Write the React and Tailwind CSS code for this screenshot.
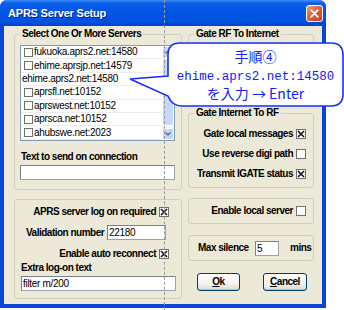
import React from "react";

const SANS = "[font-family:'Liberation_Sans',Arial,sans-serif]";

function Check({ checked, size = 10 }) {
  return (
    <span
      className={`inline-flex items-center justify-center border border-[#6f6f6f] bg-white shrink-0 ${size === 10 ? "w-[10px] h-[10px]" : "w-[9px] h-[9px]"}`}
    >
      {checked && (
        <svg width="8" height="8" viewBox="0 0 8 8">
          <path d="M1 1L7 7M7 1L1 7" stroke="#1a1a1a" strokeWidth="1.7" />
        </svg>
      )}
    </span>
  );
}

function Bold({ children, className = "" }) {
  return (
    <span className={`font-bold text-[10px] leading-[12px] tracking-[-0.5px] text-black whitespace-nowrap ${className}`}>
      {children}
    </span>
  );
}

const servers = [
  { t: "fukuoka.aprs2.net:14580", cb: true },
  { t: "ehime.aprsjp.net:14579", cb: true },
  { t: "ehime.aprs2.net:14580", cb: false },
  { t: "aprsfl.net:10152", cb: true },
  { t: "aprswest.net:10152", cb: true },
  { t: "aprsca.net:10152", cb: true },
  { t: "ahubswe.net:2023", cb: true },
];

function Legend({ children }) {
  return (
    <legend className="ml-[5px] px-[2px] font-bold text-[10px] leading-[12px] tracking-[-0.5px] text-black whitespace-nowrap">
      {children}
    </legend>
  );
}

function Input({ value = "", className = "" }) {
  return (
    <div
      className={`bg-white border border-[#9aa2ac] border-t-[#7b818a] border-l-[#7b818a] text-[10px] leading-[13px] tracking-[-0.3px] pl-[1px] text-black overflow-hidden whitespace-nowrap ${className}`}
    >
      {value}
    </div>
  );
}

function Button({ children, className = "" }) {
  return (
    <div
      className={`h-[18px] flex items-center justify-center rounded-[3px] border border-[#003c74] bg-[linear-gradient(to_bottom,#ffffff_0%,#f4f3ee_60%,#dcd9cc_100%)] shadow-[inset_0_-1px_0_#c8c4b4] ${className}`}
    >
      <Bold>{children}</Bold>
    </div>
  );
}

export default function App() {
  return (
    <div className={`relative w-[344px] h-[310px] bg-white overflow-hidden ${SANS}`}>
      {/* Window */}
      <div className="w-[326px] h-[308px] flex flex-col rounded-t-[7px] bg-[#0846d6] overflow-hidden">
        {/* Title bar */}
        <div className="h-[26px] shrink-0 flex items-center justify-between pl-[8px] pr-[3px] bg-[linear-gradient(to_bottom,#3d8ffc_0%,#0a5de9_12%,#0256e5_45%,#0053e1_80%,#0042cf_100%)]">
          <span className="text-white font-bold text-[11px] tracking-[-0.2px] [text-shadow:1px_1px_0_#0b1f8a]">
            APRS Server Setup
          </span>
          <div className="w-[17px] h-[17px] rounded-[3px] border border-white flex items-center justify-center bg-[linear-gradient(135deg,#f0a080_0%,#e0603a_45%,#c8401e_100%)]">
            <svg width="9" height="9" viewBox="0 0 9 9">
              <path d="M1.2 1.2L7.8 7.8M7.8 1.2L1.2 7.8" stroke="#fff" strokeWidth="1.8" strokeLinecap="round" />
            </svg>
          </div>
        </div>
        {/* Client area */}
        <div className="mx-[4px] mb-[4px] flex-1 bg-[#ece9d8] flex gap-[6px] pl-[10px] pt-[2px]">
          {/* Left column */}
          <div className="w-[168px] flex flex-col">
            <fieldset className="h-[162px] border border-[#d0d0bf] rounded-[3px]">
              <Legend>Select One Or More Servers</Legend>
              <div className="ml-[5px] mt-[5px] w-[155px] h-[96px] border border-[#7f9db9] bg-white flex">
                <div className="flex-1 flex flex-col">
                  {servers.map((s, i) => (
                    <div
                      key={i}
                      className="h-[13.4px] flex items-center border-b border-[#ececec] text-[10px] tracking-[-0.3px] text-black whitespace-nowrap"
                    >
                      {s.cb ? (
                        <div className="flex items-center pl-[3px] gap-[1px]">
                          <Check checked={false} size={9} />
                          <span className="leading-[12px]">{s.t}</span>
                        </div>
                      ) : (
                        <span className="pl-[1px] leading-[12px]">{s.t}</span>
                      )}
                    </div>
                  ))}
                </div>
                {/* scrollbar */}
                <div className="w-[12px] flex flex-col bg-[#f3f2ec]">
                  <div className="h-[12px] rounded-[2px] border border-white bg-[#c4d4fb] flex items-center justify-center">
                    <svg width="6" height="4" viewBox="0 0 6 4">
                      <path d="M0.5 3.5L3 1L5.5 3.5" stroke="#4d6185" strokeWidth="1.2" fill="none" />
                    </svg>
                  </div>
                  <div className="h-[68px] rounded-[2px] border border-white bg-[#c8d8fc]" />
                  <div className="flex-1" />
                  <div className="h-[12px] rounded-[2px] border border-white bg-[#c4d4fb] flex items-center justify-center">
                    <svg width="6" height="4" viewBox="0 0 6 4">
                      <path d="M0.5 0.5L3 3L5.5 0.5" stroke="#4d6185" strokeWidth="1.2" fill="none" />
                    </svg>
                  </div>
                </div>
              </div>
              <div className="ml-[6px] mt-[10px] h-[12px] flex items-center">
                <Bold>Text to send on connection</Bold>
              </div>
              <Input className="ml-[5px] mt-[2px] w-[155px] h-[15px]" />
            </fieldset>

            <div className="mt-[9px] h-[100px] border border-[#d0d0bf] rounded-[3px] flex flex-col">
              <div className="mt-[6px] h-[12px] flex items-center justify-end gap-[3px] pr-[12px]">
                <Bold>APRS server log on required</Bold>
                <Check checked />
              </div>
              <div className="mt-[7px] h-[15px] flex items-center pl-[11px]">
                <Bold className="w-[81px]">Validation number</Bold>
                <Input value="22180" className="w-[59px] h-[15px]" />
              </div>
              <div className="mt-[8px] h-[12px] flex items-center justify-end gap-[3px] pr-[12px]">
                <Bold>Enable auto reconnect</Bold>
                <Check checked />
              </div>
              <div className="mt-[2px] h-[12px] flex items-center pl-[6px]">
                <Bold>Extra log-on text</Bold>
              </div>
              <Input value="filter m/200" className="ml-[6px] mt-[2px] w-[155px] h-[15px]" />
            </div>
          </div>

          {/* Right column */}
          <div className="w-[126px] flex flex-col">
            <fieldset className="h-[77px] border border-[#d0d0bf] rounded-[3px]">
              <Legend>Gate RF To Internet</Legend>
            </fieldset>
            <fieldset className="mt-[2px] h-[81px] border border-[#d0d0bf] rounded-[3px]">
              <Legend>Gate Internet To RF</Legend>
              <div className="flex flex-col gap-[8px] mt-[9px]">
                <div className="h-[12px] flex items-center justify-end gap-[3px] pr-[7px]">
                  <Bold>Gate local messages</Bold>
                  <Check checked />
                </div>
                <div className="h-[12px] flex items-center justify-end gap-[3px] pr-[7px]">
                  <Bold>Use reverse digi path</Bold>
                  <Check checked={false} />
                </div>
                <div className="h-[12px] flex items-center justify-end gap-[3px] pr-[7px]">
                  <Bold>Transmit IGATE status</Bold>
                  <Check checked />
                </div>
              </div>
            </fieldset>
            <div className="mt-[10px] h-[26px] border border-[#d0d0bf] rounded-[3px] flex items-center justify-end gap-[3px] pr-[7px]">
              <Bold>Enable local server</Bold>
              <Check checked={false} />
            </div>
            <div className="mt-[11px] h-[26px] border border-[#d0d0bf] rounded-[3px] flex items-center pl-[9px]">
              <Bold className="w-[57px]">Max silence</Bold>
              <Input value="5" className="w-[24px] h-[15px]" />
              <Bold className="ml-[11px]">mins</Bold>
            </div>
            <div className="mt-[12px] flex pl-[9px]">
              <Button className="w-[43px]">
                <span className="underline">O</span>k
              </Button>
              <Button className="ml-[23px] w-[44px]">
                <span className="underline">C</span>ancel
              </Button>
            </div>
          </div>
        </div>
      </div>

      {/* dashed guide line */}
      <div className="absolute left-[164px] top-0 h-[310px] border-l border-dashed border-[#9a9a9a]" />

      {/* Callout bubble */}
      <svg className="absolute left-0 top-0" width="344" height="310" viewBox="0 0 344 310">
        <path
          d="M180 43 H331 Q343 43 343 55 V94 Q343 106 331 106 H182 Q172 106 168 96 L130 79 L168 76 V55 Q168 43 180 43 Z"
          fill="#ffffff"
          stroke="#1a2cff"
          strokeWidth="1.6"
        />
      </svg>
      <div className="absolute left-[168px] top-[43px] w-[175px] h-[63px] flex flex-col items-center pt-[5px] text-[#1020ff]">
        <div className="h-[16px] leading-[16px] text-[14px] [font-family:'Noto_Sans_CJK_JP',sans-serif]">手順④</div>
        <div className="mt-[5px] h-[16px] leading-[16px] text-[12.5px] [font-family:'Liberation_Mono',monospace]">
          ehime.aprs2.net:14580
        </div>
        <div className="h-[16px] leading-[16px] text-[14px] [font-family:'Noto_Sans_CJK_JP',sans-serif]">
          を入力 → Enter
        </div>
      </div>
    </div>
  );
}
